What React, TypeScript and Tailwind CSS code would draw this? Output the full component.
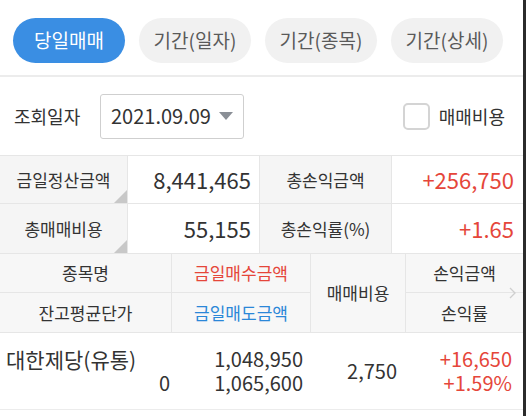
import React from 'react';

const font = { fontFamily: '"Noto Sans CJK KR", "Noto Sans", sans-serif' };

const tabs = ['당일매매', '기간(일자)', '기간(종목)', '기간(상세)'];

const Corner = () => (
  <span className="absolute bottom-0 right-0 w-0 h-0 border-l-[13px] border-l-transparent border-b-[13px] border-b-[#c8c8c8]" />
);

const App = () => {
  return (
    <div className="flex w-[526px] h-[416px] bg-white text-[#333]" style={font}>
      <div className="flex-1 flex flex-col">
        {/* Tabs */}
        <div className="h-[77px] flex gap-[14px] pl-[13px] pt-[18px] border-b-2 border-[#ececec]">
          {tabs.map((t, i) => (
            <div
              key={t}
              className={
                i === 0
                  ? 'w-[112px] h-[45px] rounded-full bg-[#3a8ee3] text-white flex items-center justify-center text-[19px]'
                  : 'w-[112px] h-[45px] rounded-full bg-[#f1f1f1] text-[#5a5a5a] flex items-center justify-center text-[19px]'
              }
            >
              {t}
            </div>
          ))}
        </div>

        {/* Search row */}
        <div className="h-[78px] flex items-center pl-[14px] pr-[18px]">
          <span className="text-[18px] text-[#333] w-[86px]">조회일자</span>
          <div className="w-[144px] h-[45px] border border-[#cfcfcf] rounded-[3px] flex items-center pl-[10px] pr-[10px] justify-between">
            <span className="text-[20px] text-[#333]">2021.09.09</span>
            <svg width="14" height="8" viewBox="0 0 14 8">
              <path d="M0 0 L14 0 L7 8 Z" fill="#8a8f96" />
            </svg>
          </div>
          <div className="ml-auto flex items-center gap-[9px]">
            <div className="w-[27px] h-[27px] border-2 border-[#d4d4d4] rounded-[5px] bg-white" />
            <span className="text-[18px] text-[#333]">매매비용</span>
          </div>
        </div>

        {/* Summary */}
        <div className="grid grid-cols-[128px_132px_132px_1fr] border-t border-[#e6e6e6]">
          <div className="relative h-[48px] bg-[#f5f5f5] border-r border-b border-[#e6e6e6] flex items-center justify-center text-[17px]">
            금일정산금액
            <Corner />
          </div>
          <div className="h-[48px] border-r border-b border-[#e6e6e6] flex items-center justify-end pr-[8px] text-[22px]">
            8,441,465
          </div>
          <div className="h-[48px] bg-[#f5f5f5] border-r border-b border-[#e6e6e6] flex items-center justify-center text-[17px]">
            총손익금액
          </div>
          <div className="h-[48px] border-b border-[#e6e6e6] flex items-center justify-end pr-[9px] text-[22px] text-[#e5463a]">
            +256,750
          </div>
          <div className="relative h-[50px] bg-[#f5f5f5] border-r border-b border-[#e6e6e6] flex items-center justify-center text-[17px]">
            총매매비용
            <Corner />
          </div>
          <div className="h-[50px] border-r border-b border-[#e6e6e6] flex items-center justify-end pr-[8px] text-[22px]">
            55,155
          </div>
          <div className="h-[50px] bg-[#f5f5f5] border-r border-b border-[#e6e6e6] flex items-center justify-center text-[17px]">
            총손익률(%)
          </div>
          <div className="h-[50px] border-b border-[#e6e6e6] flex items-center justify-end pr-[9px] text-[22px] text-[#e5463a]">
            +1.65
          </div>
        </div>

        {/* List header */}
        <div className="relative grid grid-cols-[172px_139px_95px_1fr] grid-rows-[39px_39px] bg-[#f7f7f7] border-b border-[#e6e6e6] text-[17px]">
          <div className="border-r border-b border-[#e6e6e6] flex items-center justify-center">종목명</div>
          <div className="border-r border-b border-[#e6e6e6] flex items-center justify-center text-[#e5463a]">금일매수금액</div>
          <div className="row-span-2 border-r border-[#e6e6e6] flex items-center justify-center">매매비용</div>
          <div className="border-b border-[#e6e6e6] flex items-center justify-center">손익금액</div>
          <div className="border-r border-[#e6e6e6] flex items-center justify-center">잔고평균단가</div>
          <div className="border-r border-[#e6e6e6] flex items-center justify-center text-[#2b87d8]">금일매도금액</div>
          <div className="flex items-center justify-center">손익률</div>
          <svg className="absolute right-[6px] top-[33px]" width="8" height="12" viewBox="0 0 8 12">
            <path d="M1 1 L6 6 L1 11" fill="none" stroke="#cfcfcf" strokeWidth="1.3" />
          </svg>
        </div>

        {/* Data row */}
        <div className="grid grid-cols-[172px_139px_95px_1fr] h-[77px] border-b border-[#ececec] text-[20px] leading-[24px]">
          <div className="flex flex-col justify-center pl-[6px] pr-[2px]">
            <span className="text-[21px]">대한제당(유통)</span>
            <span className="text-right">0</span>
          </div>
          <div className="flex flex-col justify-center items-end pr-[8px]">
            <span>1,048,950</span>
            <span>1,065,600</span>
          </div>
          <div className="flex items-center justify-end pr-[9px]">2,750</div>
          <div className="flex flex-col justify-center items-end pr-[11px] text-[#e5463a]">
            <span>+16,650</span>
            <span>+1.59%</span>
          </div>
        </div>
      </div>
      <div className="w-[3px] bg-[#2b2b2b]" />
    </div>
  );
};

export default App;
